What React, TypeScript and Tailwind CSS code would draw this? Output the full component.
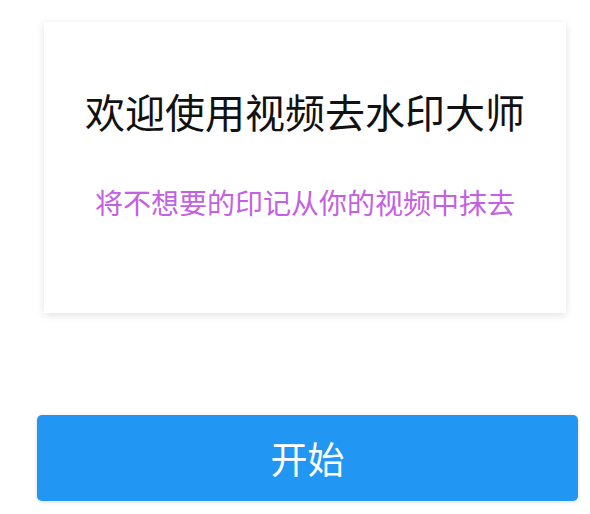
import React from 'react';

export default function App() {
  return (
    <div
      className="min-h-screen w-full bg-white pt-[22px]"
      style={{ fontFamily: '"Noto Sans CJK SC", "Noto Sans", sans-serif' }}
    >
      {/* Welcome card */}
      <div className="ml-[44px] flex h-[291px] w-[522px] flex-col items-center bg-white pt-[69px] shadow-[0_2px_8px_rgba(0,0,0,0.12)]">
        <h1 className="text-[40px] leading-[40px] font-normal text-[#111111]">欢迎使用视频去水印大师</h1>
        <p className="mt-[57px] text-[28px] leading-[28px] text-[#c460e4]">将不想要的印记从你的视频中抹去</p>
      </div>

      {/* Start button */}
      <button className="mt-[102px] ml-[37px] flex h-[86px] w-[541px] items-center justify-center rounded-[5px] bg-[#2196f3] text-[37px] leading-none text-white shadow-[0_1px_4px_rgba(0,0,0,0.15)]">
        开始
      </button>
    </div>
  );
}
